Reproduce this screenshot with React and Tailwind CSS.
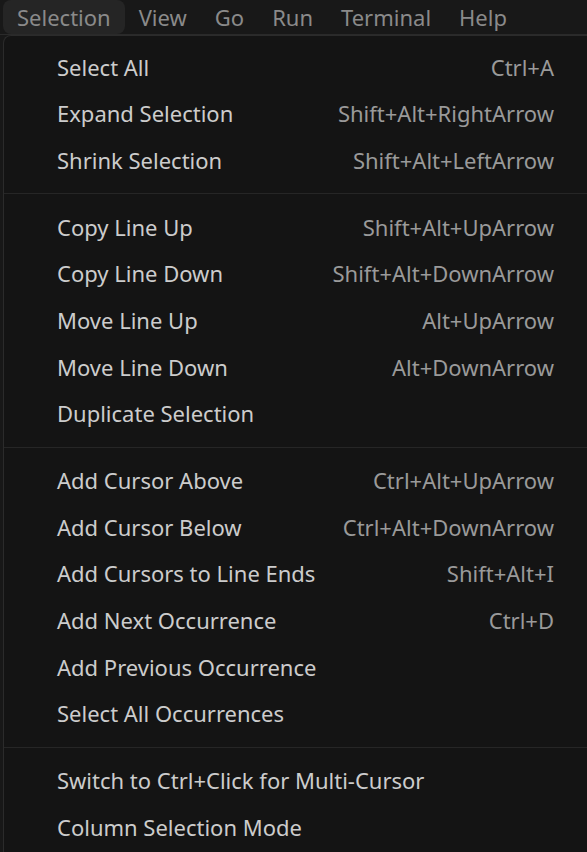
import React from "react";

const menuBar = ["Selection", "View", "Go", "Run", "Terminal", "Help"];

const groups = [
  [
    ["Select All", "Ctrl+A"],
    ["Expand Selection", "Shift+Alt+RightArrow"],
    ["Shrink Selection", "Shift+Alt+LeftArrow"],
  ],
  [
    ["Copy Line Up", "Shift+Alt+UpArrow"],
    ["Copy Line Down", "Shift+Alt+DownArrow"],
    ["Move Line Up", "Alt+UpArrow"],
    ["Move Line Down", "Alt+DownArrow"],
    ["Duplicate Selection", ""],
  ],
  [
    ["Add Cursor Above", "Ctrl+Alt+UpArrow"],
    ["Add Cursor Below", "Ctrl+Alt+DownArrow"],
    ["Add Cursors to Line Ends", "Shift+Alt+I"],
    ["Add Next Occurrence", "Ctrl+D"],
    ["Add Previous Occurrence", ""],
    ["Select All Occurrences", ""],
  ],
  [
    ["Switch to Ctrl+Click for Multi-Cursor", ""],
    ["Column Selection Mode", ""],
  ],
];

export default function App() {
  return (
    <div
      className="w-[587px] h-[852px] overflow-hidden bg-[#181818] text-[22px]"
      style={{ fontFamily: '"Noto Sans", "Open Sans", sans-serif' }}
    >
      {/* menu bar */}
      <div className="flex h-[35px] pl-[3px] border-b border-[#2a2a2a]">
        {menuBar.map((m, i) => (
          <div
            key={m}
            className={
              i === 0
                ? "px-[14px] h-[34px] flex items-center rounded-[8px] bg-[#252525] text-[#8a8a8a]"
                : "px-[14px] h-[34px] flex items-center text-[#8a8a8a]"
            }
          >
            {m}
          </div>
        ))}
      </div>

      {/* dropdown */}
      <div className="ml-[3px] w-[600px] h-[830px] rounded-tl-[8px] border-l border-t border-[#2b2b2b] bg-[#141414] pt-[8px]">
        {groups.map((g, gi) => (
          <div key={gi}>
            {gi > 0 && <div className="h-[20px] flex items-center"><div className="w-full h-px bg-[#262626]" /></div>}
            {g.map(([label, key]) => (
              <div key={label} className="h-[46.67px] flex items-center justify-between pl-[53px] pr-[34px] w-[584px]">
                <span className="text-[#cccccc]">{label}</span>
                <span className="text-[#9a9a9a]">{key}</span>
              </div>
            ))}
          </div>
        ))}
      </div>
    </div>
  );
}
